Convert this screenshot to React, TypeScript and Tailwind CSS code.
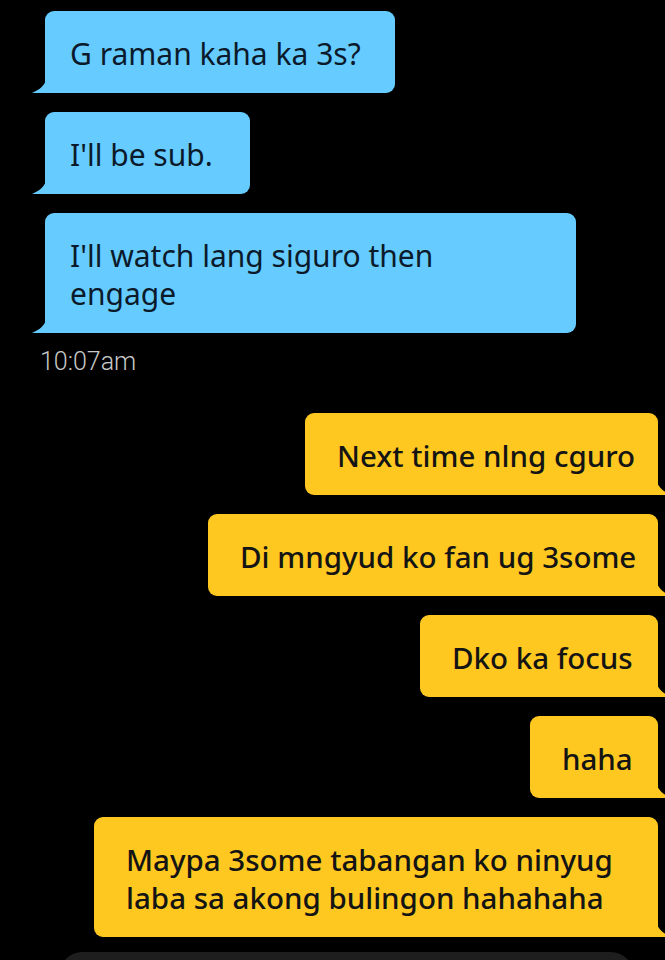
import React from 'react';

type Msg = { text: React.ReactNode; width: string };

const incoming: Msg[] = [
  { text: 'G raman kaha ka 3s?', width: 'w-[350px]' },
  { text: "I'll be sub.", width: 'w-[205px]' },
  {
    text: (
      <>
        I'll watch lang siguro then
        <br />
        engage
      </>
    ),
    width: 'w-[531px]',
  },
];

const outgoing: Msg[] = [
  { text: 'Next time nlng cguro', width: 'w-[353px]' },
  { text: 'Di mngyud ko fan ug 3some', width: 'w-[450px]' },
  { text: 'Dko ka focus', width: 'w-[238px]' },
  { text: 'haha', width: 'w-[128px]' },
  {
    text: (
      <>
        Maypa 3some tabangan ko ninyug
        <br />
        laba sa akong bulingon hahahaha
      </>
    ),
    width: 'w-[564px]',
  },
];

function LeftTail() {
  return (
    <svg className="absolute -left-[13px] bottom-0" width="14" height="13" viewBox="0 0 14 13">
      <path d="M14 0 C12 6 7 10 0 13 L14 13 Z" fill="#66ccff" />
    </svg>
  );
}

function RightTail() {
  return (
    <svg className="absolute -right-[13px] bottom-0" width="14" height="13" viewBox="0 0 14 13">
      <path d="M0 0 C2 6 7 10 14 13 L0 13 Z" fill="#fec820" />
    </svg>
  );
}

export default function App() {
  return (
    <div className="w-full h-[960px] bg-black overflow-hidden font-['Noto_Sans',sans-serif]">
      {/* their messages */}
      <div className="flex flex-col items-start gap-[19px] pt-[11px] pl-[45px]">
        {incoming.map((m, i) => (
          <div
            key={i}
            className={`relative ${m.width} bg-[#66ccff] rounded-[9px] rounded-bl-none pl-[25px] pt-[24px] pb-[20px] text-[30px] leading-[38px] text-[#0b1a2b]`}
          >
            {m.text}
            <LeftTail />
          </div>
        ))}
      </div>

      <div className="pl-[40px] mt-[16px] text-[25px] leading-[25px] text-[#c8c8c8] font-['Roboto',sans-serif] font-light">
        10:07am
      </div>

      {/* my messages */}
      <div className="flex flex-col items-end gap-[19px] mt-[39px] pr-[7px]">
        {outgoing.map((m, i) => (
          <div
            key={i}
            className={`relative ${m.width} bg-[#fec820] rounded-[9px] rounded-br-none pl-[32px] pt-[24px] pb-[20px] text-[29.5px] leading-[38px] font-medium text-[#141414]`}
          >
            {m.text}
            <RightTail />
          </div>
        ))}
      </div>

      {/* composer, mostly cut off */}
      <div className="ml-[60px] mt-[15px] w-[573px] h-[44px] rounded-[22px] bg-[#1e1e1e]" />
    </div>
  );
}
